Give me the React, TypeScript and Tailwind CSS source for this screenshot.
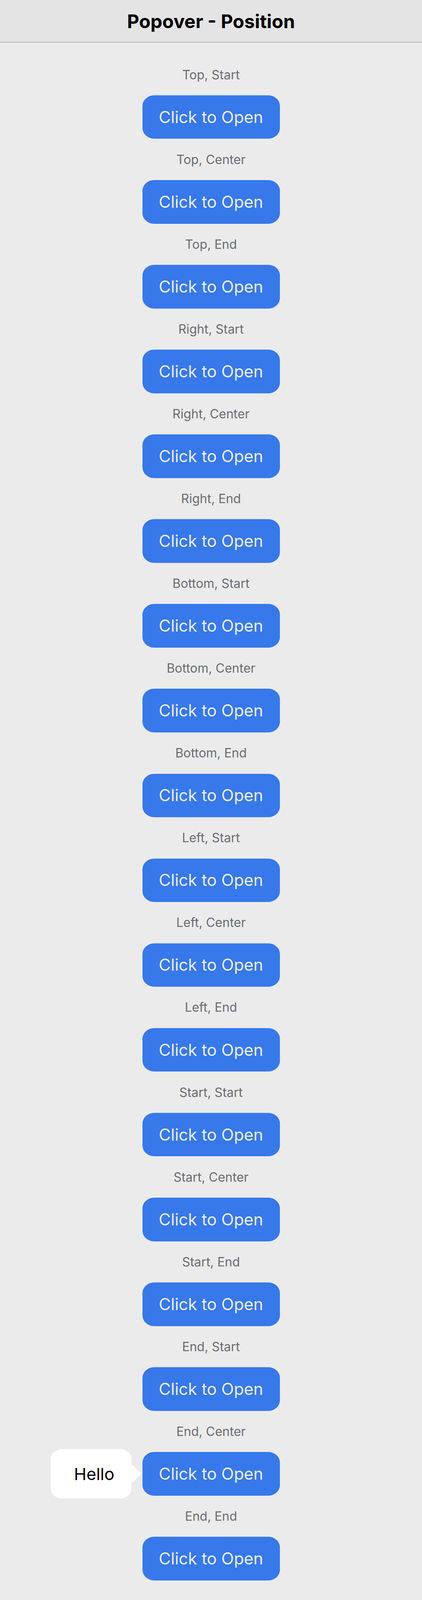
import React from "react";

const labels = [
  "Top, Start",
  "Top, Center",
  "Top, End",
  "Right, Start",
  "Right, Center",
  "Right, End",
  "Bottom, Start",
  "Bottom, Center",
  "Bottom, End",
  "Left, Start",
  "Left, Center",
  "Left, End",
  "Start, Start",
  "Start, Center",
  "Start, End",
  "End, Start",
  "End, Center",
  "End, End",
];

function Popover() {
  return (
    <div className="absolute right-full mr-[27.4px] top-1/2 -translate-y-1/2 w-[206.7px] h-[126.5px] rounded-[28px/25px] bg-white flex items-center pl-[59px]">
      <span className="text-[43px] leading-none text-black">Hello</span>
      <svg
        className="absolute left-full top-1/2 -translate-y-1/2"
        width="25"
        height="44"
        viewBox="0 0 25 44"
      >
        <path
          d="M0 0 C2.5 0 4 1.1 5.5 2.6 L22.5 19 Q24.5 22 22.5 25 L5.5 41.4 C4 42.9 2.5 44 0 44 Z"
          fill="#ffffff"
        />
      </svg>
    </div>
  );
}

export default function App() {
  return (
    <div
      className="min-h-[4096px] bg-[#ebebeb]"
      style={{ fontFamily: "Inter, 'Noto Sans', sans-serif" }}
    >
      <header className="h-[109.3px] bg-[#e4e4e4] border-b-[2.7px] border-[#b6b6b6] flex items-center justify-center pt-[3.4px]">
        <h1 className="text-[48px] font-bold text-black leading-none">
          Popover - Position
        </h1>
      </header>
      <main className="flex flex-col items-center pt-[64.3px] pb-[48px] gap-[35.2px]">
        {labels.map((label, i) => (
          <div key={label} className="flex flex-col items-center gap-[35.3px]">
            <div className="h-[35px] text-[32px] leading-[35px] text-[#6a6b70] whitespace-nowrap">
              {label}
            </div>
            <div className="relative h-[111.6px]">
              {i === 16 && <Popover />}
              <button className="w-[352px] h-[111.6px] rounded-[30px/27px] bg-[#3778eb] text-[#eef0f6] text-[42px] leading-none flex items-center justify-center">
                Click to Open
              </button>
            </div>
          </div>
        ))}
      </main>
    </div>
  );
}
